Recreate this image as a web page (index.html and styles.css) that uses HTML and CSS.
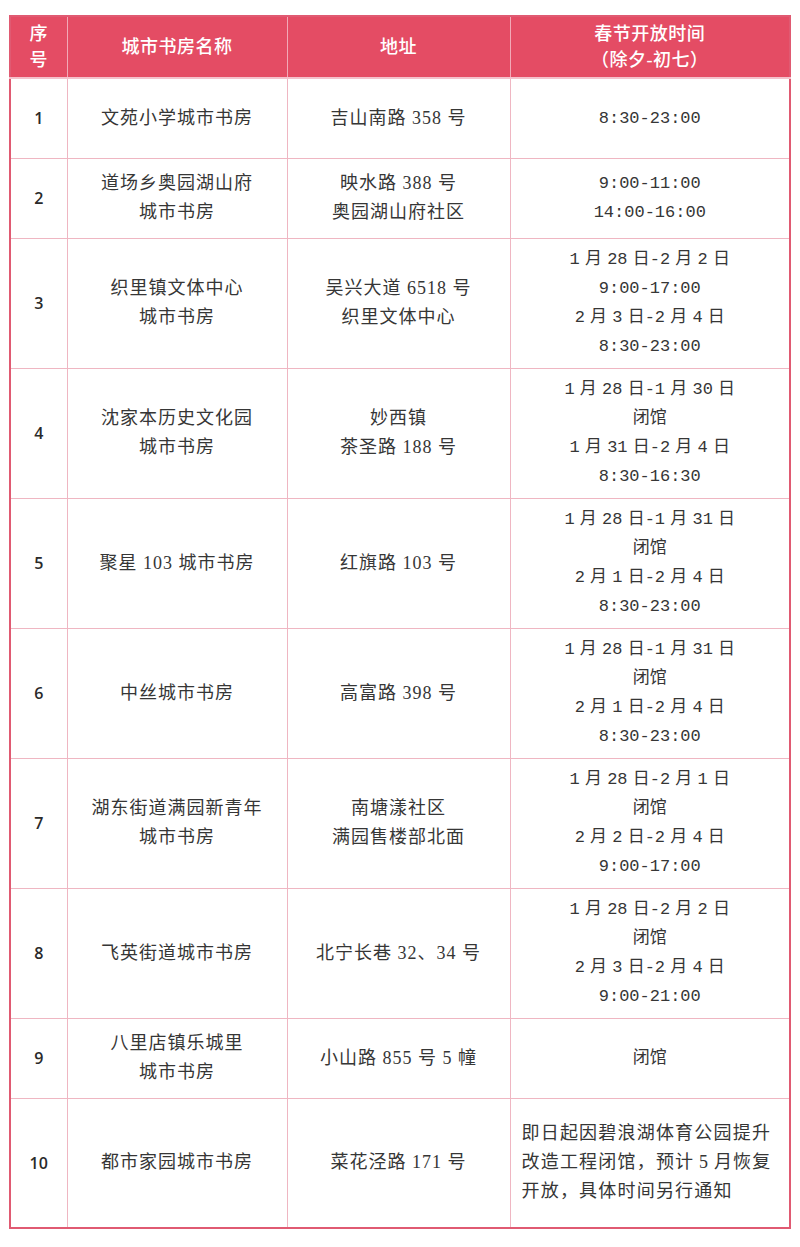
FILE: index.html
```html
<!DOCTYPE html>
<html lang="zh-CN">
<head>
<meta charset="utf-8">
<title>春节开放时间</title>
<link rel="stylesheet" href="styles.css">
</head>
<body>
<table class="sched">
  <colgroup>
    <col class="c-no"><col class="c-name"><col class="c-addr"><col class="c-time">
  </colgroup>
  <thead>
    <tr class="r-head">
      <th>序<br>号</th>
      <th>城市书房名称</th>
      <th>地址</th>
      <th>春节开放时间<br>（除夕-初七）</th>
    </tr>
  </thead>
  <tbody>
    <tr class="r-short">
      <td class="no">1</td>
      <td class="txt">文苑小学城市书房</td>
      <td class="txt">吉山南路 358 号</td>
      <td class="tm">8:30-23:00</td>
    </tr>
    <tr class="r-short">
      <td class="no">2</td>
      <td class="txt">道场乡奥园湖山府<br>城市书房</td>
      <td class="txt">映水路 388 号<br>奥园湖山府社区</td>
      <td class="tm">9:00-11:00<br>14:00-16:00</td>
    </tr>
    <tr class="r-tall">
      <td class="no">3</td>
      <td class="txt">织里镇文体中心<br>城市书房</td>
      <td class="txt">吴兴大道 6518 号<br>织里文体中心</td>
      <td class="tm">1 月 28 日-2 月 2 日<br>9:00-17:00<br>2 月 3 日-2 月 4 日<br>8:30-23:00</td>
    </tr>
    <tr class="r-tall">
      <td class="no">4</td>
      <td class="txt">沈家本历史文化园<br>城市书房</td>
      <td class="txt">妙西镇<br>茶圣路 188 号</td>
      <td class="tm">1 月 28 日-1 月 30 日<br>闭馆<br>1 月 31 日-2 月 4 日<br>8:30-16:30</td>
    </tr>
    <tr class="r-tall">
      <td class="no">5</td>
      <td class="txt">聚星 103 城市书房</td>
      <td class="txt">红旗路 103 号</td>
      <td class="tm">1 月 28 日-1 月 31 日<br>闭馆<br>2 月 1 日-2 月 4 日<br>8:30-23:00</td>
    </tr>
    <tr class="r-tall">
      <td class="no">6</td>
      <td class="txt">中丝城市书房</td>
      <td class="txt">高富路 398 号</td>
      <td class="tm">1 月 28 日-1 月 31 日<br>闭馆<br>2 月 1 日-2 月 4 日<br>8:30-23:00</td>
    </tr>
    <tr class="r-tall">
      <td class="no">7</td>
      <td class="txt">湖东街道满园新青年<br>城市书房</td>
      <td class="txt">南塘漾社区<br>满园售楼部北面</td>
      <td class="tm">1 月 28 日-2 月 1 日<br>闭馆<br>2 月 2 日-2 月 4 日<br>9:00-17:00</td>
    </tr>
    <tr class="r-tall">
      <td class="no">8</td>
      <td class="txt">飞英街道城市书房</td>
      <td class="txt">北宁长巷 32、34 号</td>
      <td class="tm">1 月 28 日-2 月 2 日<br>闭馆<br>2 月 3 日-2 月 4 日<br>9:00-21:00</td>
    </tr>
    <tr class="r-short">
      <td class="no">9</td>
      <td class="txt">八里店镇乐城里<br>城市书房</td>
      <td class="txt">小山路 855 号 5 幢</td>
      <td class="tm">闭馆</td>
    </tr>
    <tr class="r-tall">
      <td class="no">10</td>
      <td class="txt">都市家园城市书房</td>
      <td class="txt">菜花泾路 171 号</td>
      <td class="note">即日起因碧浪湖体育公园提升<br>改造工程闭馆，预计 5 月恢复<br>开放，具体时间另行通知</td>
    </tr>
  </tbody>
</table>
</body>
</html>
```

FILE: styles.css
```css
html, body {
  margin: 0;
  padding: 0;
  background: #ffffff;
}

body {
  padding: 15px 0 0 9px;
}

.sched {
  border-collapse: collapse;
  table-layout: fixed;
  width: 780px;
  border: 2px solid #e05a72;
  color: #363636;
  font-family: "Liberation Serif", "Noto Sans CJK SC", serif;
}

.c-no { width: 57px; }
.c-name { width: 220px; }
.c-addr { width: 223px; }
.c-time { width: 280px; }

.sched th,
.sched td {
  border: 1px solid #efb6c2;
  text-align: center;
  vertical-align: middle;
  padding: 0;
}

.r-head {
  height: 62px;
}

.sched th {
  background: #e44c64;
  color: #ffffff;
  font-weight: 500;
  font-size: 18px;
  line-height: 26px;
  letter-spacing: 0.5px;
  border-color: #f2a9b7;
  border-bottom: 2px solid #f4c2cc;
}

.r-short { height: 80px; }
.r-tall { height: 130px; }

.no {
  font-family: "Open Sans", "Liberation Sans", sans-serif;
  font-size: 16px;
  font-weight: 600;
  color: #2a2a2a;
}

.txt {
  font-size: 18px;
  line-height: 29px;
  letter-spacing: 1px;
  white-space: nowrap;
}

.tm {
  font-family: "Liberation Mono", "Noto Sans CJK SC", monospace;
  font-size: 17px;
  line-height: 29px;
  word-spacing: -5px;
  white-space: nowrap;
}

.note {
  text-align: left !important;
  padding-left: 11px !important;
  font-size: 18px;
  line-height: 29px;
  letter-spacing: 1.2px;
  word-spacing: -1px;
  white-space: nowrap;
}
```
